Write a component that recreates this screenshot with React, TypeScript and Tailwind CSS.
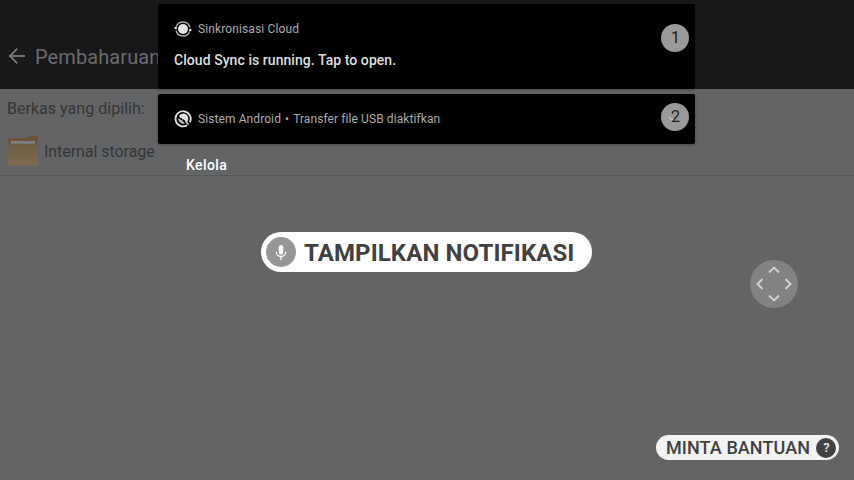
import React from 'react';

function BackArrow() {
  return (
    <svg width="18" height="18" viewBox="0 0 18 18" fill="none" stroke="#717274" strokeWidth="2" className="shrink-0">
      <path d="M17 9H2.200M9.300 1.600L1.900 9l7.400 7.400" />
    </svg>
  );
}

function FolderIcon() {
  return (
    <svg width="30" height="30" viewBox="0 0 30 30" className="shrink-0">
      <defs>
        <linearGradient id="folder" x1="0" y1="0" x2="0" y2="1">
          <stop offset="0" stopColor="#6d5d45" />
          <stop offset="1" stopColor="#806c4e" />
        </linearGradient>
      </defs>
      <path d="M0 29V3Q0 2 1 2H19.500L21.500 0H29Q30 0 30 1V29Z" fill="#6e5238" />
      <rect x="3" y="5" width="24" height="4" fill="#808081" />
      <path d="M0 8.500Q0 7.800 1 7.800H29Q30 7.800 30 8.500V28.500Q30 29.600 29 29.600H1Q0 29.600 0 28.500Z" fill="url(#folder)" />
    </svg>
  );
}

function SyncIcon() {
  return (
    <svg width="18" height="18" viewBox="0 0 18 18" fill="none" className="shrink-0">
      <circle cx="9" cy="9" r="5" fill="#e2e2e2" />
      <path d="M2.200 6.800A7.200 7.200 0 0 1 16 7.500M15.800 11.200A7.200 7.200 0 0 1 2 10.500" stroke="#a6a6a6" strokeWidth="1.400" />
      <circle cx="1.700" cy="8" r="1.300" fill="#dedede" />
      <circle cx="16.300" cy="10" r="1.300" fill="#dedede" />
    </svg>
  );
}

function SystemIcon() {
  return (
    <svg width="18" height="18" viewBox="0 0 18 18" fill="none" className="shrink-0">
      <path d="M13.200 15.200A7.600 7.600 0 1 1 15.800 12.400" stroke="#e2e2e2" strokeWidth="1.800" />
      <path d="M5 6A5 5 0 0 1 13.600 11.300L12.400 12L9.600 9.400L8.300 9.300L7.800 8.200L6.200 7.900Z" fill="#e2e2e2" />
      <path d="M4.400 8.200L8 10.600L10.900 13.400A4.900 4.900 0 0 1 4.400 8.200Z" fill="#bdbdbd" />
      <path d="M11.500 11.200L14.600 14.400" stroke="#e2e2e2" strokeWidth="1.500" />
    </svg>
  );
}

function MicIcon() {
  return (
    <svg width="30" height="30" viewBox="0 0 30 30" fill="none" className="shrink-0">
      <circle cx="15" cy="15" r="15" fill="#969696" />
      <rect x="12.800" y="8" width="4.400" height="9.500" rx="2.200" fill="#fff" />
      <path d="M10.300 14.800a4.700 4.700 0 0 0 9.400 0M15 19.500V23" stroke="#fff" strokeWidth="1.300" />
    </svg>
  );
}

function Badge({ value }: { value: string }) {
  return (
    <span className="flex h-7 w-7 items-center justify-center rounded-full bg-[#999999] pl-px text-base leading-none text-[#1c1c1c]">
      {value}
    </span>
  );
}

function DirectionPad() {
  return (
    <svg width="48" height="48" viewBox="0 0 48 48" fill="none" className="absolute left-[750px] top-[260px]">
      <circle cx="24" cy="24" r="24" fill="#828282" />
      <path
        d="M19 12.500L24 7.500L29 12.500M19 35.500L24 40.500L29 35.500M12.500 19L7.500 24L12.500 29M35.500 19L40.500 24L35.500 29"
        stroke="#d2d2d2"
        strokeWidth="1.900"
      />
    </svg>
  );
}

function FilePage() {
  return (
    <div className="h-full">
      <header className="flex h-[89px] items-start gap-[9px] bg-[#17181a] pl-2 pt-[45px] text-[#6b6c6e]">
        <div className="pt-[2px]"><BackArrow /></div>
        <h1 className="text-[20px] leading-6 tracking-[0.1px]">Pembaharuan</h1>
      </header>
      <p className="h-[46px] pl-[7px] pt-[10px] text-base leading-5 tracking-[0.03px] text-[#343537]">Berkas yang dipilih:</p>
      <div className="flex h-[41px] gap-1.5 border-b border-[#555658] pl-2 pt-px text-base text-[#343537]">
        <FolderIcon />
        <span className="pt-[6px] leading-5 tracking-[-0.05px]">Internal storage</span>
      </div>
    </div>
  );
}

export default function App() {
  return (
    <main className="relative h-[480px] w-[854px] overflow-hidden bg-[#636466] font-['Roboto','Liberation_Sans',sans-serif]">
      <FilePage />
      <div className="absolute left-[158px] top-1 flex w-[537px] flex-col gap-[5px]">
        <section className="flex h-[85px] justify-between rounded-[2px] bg-black pl-4 pr-1.5 pt-4 shadow-[0_1px_3px_rgba(0,0,0,0.3)]">
          <div>
            <div className="flex h-[18px] items-center gap-1.5 text-xs tracking-[0.12px] text-[#ababab]">
              <SyncIcon />
              <span>Sinkronisasi Cloud</span>
            </div>
            <p className="mt-3 text-sm leading-5 font-medium tracking-[0.06px] text-[#dedede]">Cloud Sync is running. Tap to open.</p>
          </div>
          <div className="pt-1"><Badge value="1" /></div>
        </section>
        <section className="flex h-[50px] justify-between rounded-[2px] bg-black pl-4 pr-1.5 pt-[9px] shadow-[0_1px_3px_rgba(0,0,0,0.3)]">
          <div className="flex h-8 items-center gap-1.5 text-xs tracking-[0.09px] text-[#ababab]">
            <SystemIcon />
            <span>Sistem Android</span>
            <span className="-mx-0.5">•</span>
            <span>Transfer file USB diaktifkan</span>
          </div>
          <div className="relative">
            <Badge value="2" />
            <svg width="8" height="6" viewBox="0 0 8 6" fill="none" className="absolute left-[7px] top-[13px]">
              <path d="M1 1L4 4L5 3" stroke="#c8c8c8" strokeWidth="1.200" />
            </svg>
          </div>
        </section>
        <button className="ml-7 mt-[6px] self-start text-sm leading-5 font-medium tracking-[0.38px] text-white">Kelola</button>
      </div>
      <button className="absolute left-[261px] top-[232px] flex h-10 w-[331px] items-center gap-2 rounded-full bg-white pl-[5px] text-2xl font-bold tracking-[0.1px] whitespace-nowrap text-[#414141]">
        <MicIcon />
        <span className="pt-0.5">TAMPILKAN NOTIFIKASI</span>
      </button>
      <DirectionPad />
      <button className="absolute left-[656px] top-[435px] flex h-[25px] w-[183px] items-center justify-between rounded-full bg-[#f3f3f3] pl-2.5 pr-[3px] text-lg font-medium tracking-[0.08px] whitespace-nowrap text-[#414141]">
        <span>MINTA BANTUAN</span>
        <span className="flex h-5 w-5 items-center justify-center rounded-full bg-[#414141] pl-px text-[13px] leading-none font-medium text-[#f3f3f3]">?</span>
      </button>
    </main>
  );
}
